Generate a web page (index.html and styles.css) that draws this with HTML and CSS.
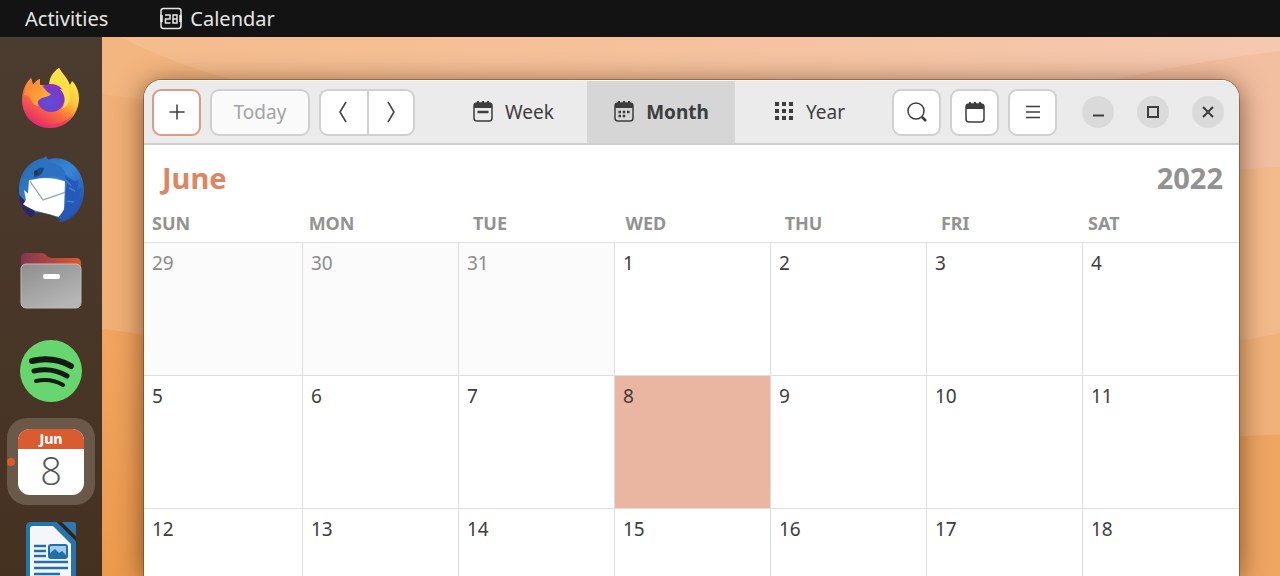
FILE: index.html
```
<!DOCTYPE html>
<html lang="en">
<head>
    <meta charset="UTF-8">
    <meta name="viewport" content="width=device-width, initial-scale=1.0">
    <title>Calendar</title>
    <link rel="stylesheet" href="styles.css">
</head>
<body>
    <header class="topbar">
        <button class="activities">Activities</button>
        <button class="app-menu">
            <svg width="24" height="24" viewBox="0 0 24 24" fill="none" stroke="#e6e6e6" stroke-width="1.5">
                <rect x="2" y="1.500" width="20" height="20" rx="2.5"/>
                <path d="M2.500 8v7M21.500 8v7" stroke-width="2.500"/>
                <path d="M6 8h5v4H6.500v4H11.500M14 8h4v8h-4zM14 12h4"/>
            </svg>
            Calendar
        </button>
    </header>
    <div class="desktop">
        <svg class="wallpaper" viewBox="0 0 1280 540" preserveAspectRatio="none">
            <defs>
                <linearGradient id="sky" x1="0" y1="0" x2="1" y2="0">
                    <stop offset="0" stop-color="#f5bb88"/>
                    <stop offset="1" stop-color="#f5c8b0"/>
                </linearGradient>
                <linearGradient id="low" x1="0" y1="0" x2="0" y2="1">
                    <stop offset="0" stop-color="#f2a561"/>
                    <stop offset="1" stop-color="#ec9a4c"/>
                </linearGradient>
            </defs>
            <rect width="1280" height="540" fill="url(#sky)"/>
            <path d="M1000 70Q1160 28 1280 14V540H1000z" fill="#f3bfa1"/>
            <path d="M0 0H120Q190 35 270 52V540H0z" fill="#f3b681"/>
            <path d="M0 48Q140 55 270 90V540H0z" fill="#f1b077"/>
            <path d="M1000 160Q1200 134 1280 130V540H1000z" fill="#f3ba8b"/>
            <path d="M1000 320Q1240 310 1280 296V540H1000z" fill="#f1b27a"/>
            <path d="M0 285Q140 287 270 330V540H0z" fill="url(#low)"/>
            <path d="M1000 415Q1200 402 1280 398V540H1000z" fill="#efa663"/>
        </svg>
        <nav class="dock" aria-label="Dock">
            <a href="#" class="dock-item" aria-label="Firefox">
                <svg width="64" height="64" viewBox="0 0 64 64">
                    <defs>
                        <linearGradient id="fox" x1="0.8" y1="0.1" x2="0.25" y2="0.95">
                            <stop offset="0" stop-color="#fff04a"/>
                            <stop offset="0.35" stop-color="#ffc43b"/>
                            <stop offset="0.65" stop-color="#fb6b3c"/>
                            <stop offset="1" stop-color="#e62c6b"/>
                        </linearGradient>
                        <radialGradient id="globe" cx="0.45" cy="0.65" r="0.7">
                            <stop offset="0" stop-color="#5a4fd8"/>
                            <stop offset="1" stop-color="#8a2fc4"/>
                        </radialGradient>
                        <linearGradient id="mane" x1="0" y1="0" x2="1" y2="1">
                            <stop offset="0" stop-color="#fb7d35"/>
                            <stop offset="1" stop-color="#ffb83a"/>
                        </linearGradient>
                    </defs>
                    <path d="M40 2c3 5 8 9 11 17l2-4c4 4 7 10 7 17 0 17-13 30-29 30S3 50 3 34c0-9 3-16 9-22l2 7c2-3 4-5 7-6l0 6 9 1C30 12 34 6 40 2z" fill="url(#fox)"/>
                    <circle cx="32" cy="32" r="14" fill="url(#globe)"/>
                    <path d="M5 29C7 22 9 17 12 12l2 7c2-3 4-5 7-6v7c5 0 5 6 11 8-2 3-7 3-9 4-4 2-5 4-4 8-8-1-5-11-14-11z" fill="url(#mane)"/>
                    <path d="M40 2c-6 4-10 11-9 16 6-1 11 1 14 6l-4-1c6 6 6 15 2 20 8-3 10-14 6-22C47 14 43 9 40 2z" fill="#ffe04a"/>
                    <path d="M6 46c9 14 32 18 48 3-6 9-14 13-23 13S11 56 6 46z" fill="#e0307c" opacity="0.6"/>
                </svg>
            </a>
            <a href="#" class="dock-item" aria-label="Thunderbird">
                <svg width="68" height="68" viewBox="0 0 68 62" preserveAspectRatio="none">
                    <defs>
                        <linearGradient id="bird" x1="0" y1="0" x2="1" y2="1">
                            <stop offset="0" stop-color="#2463ad"/>
                            <stop offset="0.5" stop-color="#3586d8"/>
                            <stop offset="1" stop-color="#213f9c"/>
                        </linearGradient>
                    </defs>
                    <path d="M29 1l-3 2C12 5 2 17 2 32c0 11 6 20 14 25h15l12 4c14-1 24-14 24-29C67 14 52 2 37 3l-6 1z" fill="url(#bird)"/>
                    <path d="M2 36c1 11 6 18 14 22l5-3-14-14z" fill="#2a2468"/>
                    <path d="M12 23c11-3 24-3 36 1l-1 28-3 5C29 53 17 52 6 45l3-4-2-9 4 3z" fill="#fff"/>
                    <path d="M13 24l13 17 22-7" fill="none" stroke="#9ba4ab" stroke-width="1.200"/>
                    <path d="M13 22C18 10 28 4 38 8c9 3 13 10 12 18-6-7-14-7-24-6-5 1-9 3-13 2z" fill="#2e70c2"/>
                    <path d="M17 17c3-5 6-6 10-5-1 5-5 8-10 8z" fill="#174a85"/>
                    <circle cx="19" cy="16" r="2" fill="#34312f"/>
                    <path d="M48 18c4 11-1 14 1 21 1 7-2 13-12 22 14-2 25-10 28-23l-4 3 4-11-5 2 2-9-5 1z" fill="#2459b8"/>
                    <path d="M49 23l5 5M52 30l6 3M50 42l7 1" stroke="#3f8ad6" stroke-width="1.200"/>
                    <path d="M14 57l6-5c8 1 16 3 24 7l-3 3H14z" fill="#4a3a2c"/>
                </svg>
            </a>
            <a href="#" class="dock-item" aria-label="Files">
                <svg width="64" height="60" viewBox="0 0 64 60">
                    <defs>
                        <linearGradient id="folder" x1="0" y1="0" x2="1" y2="0">
                            <stop offset="0" stop-color="#843553"/>
                            <stop offset="1" stop-color="#df592d"/>
                        </linearGradient>
                        <linearGradient id="drawer" x1="0" y1="0" x2="0.6" y2="1">
                            <stop offset="0" stop-color="#8e8e8e"/>
                            <stop offset="1" stop-color="#b5b5b5"/>
                        </linearGradient>
                    </defs>
                    <path d="M2 8q0-5 5-5h16q3 0 5 3 2 2 5 2h24q5 0 5 5v20H2z" fill="url(#folder)"/>
                    <rect x="2" y="14" width="60" height="44" rx="5" fill="url(#drawer)" stroke="#bdbdbd"/>
                    <rect x="24" y="24" width="17" height="5" rx="2" fill="#fff"/>
                </svg>
            </a>
            <a href="#" class="dock-item" aria-label="Spotify">
                <svg width="64" height="64" viewBox="0 0 64 64">
                    <circle cx="32" cy="32" r="31" fill="#67d66f"/>
                    <g fill="none" stroke="#111b12" stroke-linecap="round">
                        <path d="M13 22Q34 17 52 27" stroke-width="6"/>
                        <path d="M15 32Q33 28 48 37" stroke-width="5"/>
                        <path d="M17 42Q32 39 44 46" stroke-width="4"/>
                    </g>
                </svg>
            </a>
            <a href="#" class="dock-item active" aria-label="Calendar">
                <span class="calendar-icon">
                    <span class="calendar-month">Jun</span>
                    <span class="calendar-day">8</span>
                </span>
            </a>
            <a href="#" class="dock-item" aria-label="Writer">
                <svg width="52" height="64" viewBox="0 0 52 64">
                    <path d="M6 1h26l19 19v43H1V6q0-5 5-5z" fill="#2674ad"/>
                    <path d="M8 5h20l18 18v40H5V8q0-3 3-3z" fill="#f4f6f8"/>
                    <path d="M37 1h11q3 0 3 3v11z" fill="#2f78b5"/>
                    <path d="M32 1l19 19v-4L36 1z" fill="#2a241f"/>
                    <path d="M9 25h12M9 30h12M9 35h12M9 41h34M9 47h34M9 53h26" stroke="#236fa9" stroke-width="2.500"/>
                    <rect x="24" y="24" width="18" height="13" rx="2" fill="#9ecdf0" stroke="#236fa9" stroke-width="2"/>
                    <path d="M25 36v-4l5-4 4 4 3-2 4 4v2z" fill="#236fa9"/>
                </svg>
            </a>
        </nav>
        <main class="window">
            <div class="headerbar">
                <button class="btn add" aria-label="New event">
                    <svg width="20" height="20" viewBox="0 0 20 20"><path d="M10 2.500v15M2.500 10h15"/></svg>
                </button>
                <button class="btn today" disabled>Today</button>
                <div class="linked">
                    <button class="btn" aria-label="Previous month">
                        <svg width="20" height="24" viewBox="0 0 20 24"><path d="M12 2L6 12l6 10"/></svg>
                    </button>
                    <button class="btn" aria-label="Next month">
                        <svg width="20" height="24" viewBox="0 0 20 24"><path d="M7 2l6 10-6 10"/></svg>
                    </button>
                </div>
                <div class="tabs">
                    <button class="tab">
                        <svg width="22" height="24" viewBox="0 0 22 24">
                            <rect x="2" y="3" width="18" height="18" rx="3"/>
                            <path d="M2 8V5q0-2 2-2h14q2 0 2 2v3zM5 1h2v3H5zM10 1h2v3h-2zM15 1h2v3h-2z" class="solid"/>
                            <path d="M5.500 12h11" stroke-width="2.500"/>
                        </svg>
                        Week
                    </button>
                    <button class="tab selected">
                        <svg width="22" height="24" viewBox="0 0 22 24">
                            <rect x="2" y="3" width="18" height="18" rx="3"/>
                            <path d="M2 8V5q0-2 2-2h14q2 0 2 2v3zM5 1h2v3H5zM10 1h2v3h-2zM15 1h2v3h-2z" class="solid"/>
                            <path d="M5.500 12h11M5.500 16h7" stroke-width="2.500" stroke-dasharray="2.500 1.750"/>
                        </svg>
                        Month
                    </button>
                    <button class="tab">
                        <svg width="22" height="24" viewBox="0 0 22 24">
                            <path d="M2 4h18M2 11h18M2 18h18" stroke-width="4" stroke-dasharray="4 3"/>
                        </svg>
                        Year
                    </button>
                </div>
                <button class="btn" aria-label="Search">
                    <svg width="22" height="22" viewBox="0 0 22 22"><circle cx="10" cy="10" r="8"/><path d="M16 16l4 4" stroke-width="2.500"/></svg>
                </button>
                <button class="btn" aria-label="Calendars">
                    <svg width="22" height="22" viewBox="0 0 22 22">
                        <rect x="2" y="3" width="18" height="18" rx="3"/>
                        <path d="M2 8V5q0-2 2-2h14q2 0 2 2v3zM5 1h2v3H5zM10 1h2v3h-2zM15 1h2v3h-2z" class="solid"/>
                    </svg>
                </button>
                <button class="btn" aria-label="Menu">
                    <svg width="20" height="20" viewBox="0 0 20 20"><path d="M3 4.500h14M3 10h14M3 15.500h14"/></svg>
                </button>
                <div class="controls">
                    <button class="control" aria-label="Minimize">
                        <svg width="16" height="16" viewBox="0 0 16 16"><path d="M3 11.500h11"/></svg>
                    </button>
                    <button class="control" aria-label="Maximize">
                        <svg width="16" height="16" viewBox="0 0 16 16"><rect x="3" y="3" width="10" height="10"/></svg>
                    </button>
                    <button class="control" aria-label="Close">
                        <svg width="16" height="16" viewBox="0 0 16 16"><path d="M3 3l10 10M13 3L3 13"/></svg>
                    </button>
                </div>
            </div>
            <div class="title">
                <h1>June</h1>
                <span class="year">2022</span>
            </div>
            <table class="month">
                <thead>
                    <tr><th>SUN</th><th>MON</th><th>TUE</th><th>WED</th><th>THU</th><th>FRI</th><th>SAT</th></tr>
                </thead>
                <tbody>
                    <tr><td class="other">29</td><td class="other">30</td><td class="other">31</td><td>1</td><td>2</td><td>3</td><td>4</td></tr>
                    <tr><td>5</td><td>6</td><td>7</td><td class="current">8</td><td>9</td><td>10</td><td>11</td></tr>
                    <tr><td>12</td><td>13</td><td>14</td><td>15</td><td>16</td><td>17</td><td>18</td></tr>
                </tbody>
            </table>
        </main>
    </div>
</body>
</html>
```
FILE: styles.css
```
* {
    box-sizing: border-box;
}

body {
    display: flex;
    flex-direction: column;
    height: 100vh;
    margin: 0;
    overflow: hidden;
    font-family: "Noto Sans", sans-serif;
    font-size: 19px;
    line-height: 24px;
    color: #3d3d3d;
}

button {
    margin: 0;
    padding: 0;
    border: none;
    background: none;
    font: inherit;
    color: inherit;
}

.topbar {
    display: flex;
    flex-shrink: 0;
    gap: 51px;
    height: 37px;
    padding-left: 25px;
    background: #131313;
    color: #e6e6e6;
    font-size: 20px;
}

.app-menu {
    display: flex;
    align-items: center;
    gap: 7px;
}

.desktop {
    position: relative;
    display: flex;
    flex: 1;
    min-height: 0;
    overflow: hidden;
    background: #f3b681;
}

.wallpaper {
    position: absolute;
    width: 100%;
    height: 100%;
}

.dock {
    position: relative;
    z-index: 1;
    display: flex;
    flex-direction: column;
    flex-shrink: 0;
    align-items: center;
    gap: 4px;
    width: 102px;
    padding-top: 17px;
    background: linear-gradient(#4b3c30, #453120);
}

.dock-item {
    position: relative;
    display: flex;
    flex-shrink: 0;
    align-items: center;
    justify-content: center;
    width: 88px;
    height: 87px;
    border-radius: 20px;
    text-decoration: none;
}

.dock-item.active {
    background: #6a5949;
}

.dock-item.active::before {
    content: "";
    position: absolute;
    left: 0;
    width: 8px;
    height: 8px;
    border-radius: 50%;
    background: #dc5a2c;
}

.calendar-icon {
    width: 66px;
    height: 66px;
    border-radius: 12px;
    background: #fff;
    text-align: center;
}

.calendar-month {
    display: block;
    height: 20px;
    border-radius: 12px 12px 0 0;
    background: #d95b30;
    color: #fff;
    font-size: 14px;
    font-weight: 800;
    line-height: 20px;
}

.calendar-day {
    display: block;
    color: #555;
    font-family: "Open Sans", sans-serif;
    font-size: 38px;
    font-weight: 300;
    line-height: 42px;
}

.window {
    position: relative;
    flex: 1;
    margin: 43px 41px 0 42px;
    border-radius: 18px 18px 0 0;
    background: #fff;
    box-shadow: 0 0 0 1px rgba(80, 40, 10, 0.4), 0 4px 28px rgba(70, 35, 10, 0.7);
}

.headerbar {
    display: flex;
    align-items: center;
    gap: 9px;
    height: 65px;
    padding: 0 15px 0 8px;
    border-top: 1px solid #f8f8f8;
    border-bottom: 2px solid #cfcfcf;
    border-radius: 18px 18px 0 0;
    background: #ebebeb;
}

.headerbar svg {
    fill: none;
    stroke: #3d3d3d;
    stroke-width: 1.5;
}

.headerbar .solid {
    fill: #3d3d3d;
    stroke: none;
}

.btn {
    display: flex;
    align-items: center;
    justify-content: center;
    width: 49px;
    height: 47px;
    border: 2px solid #d0d0d0;
    border-radius: 9px;
    background: #fff;
}

.add {
    border-color: #e09a7f;
}

.today {
    width: 100px;
    background: #fafafa;
    color: #a3a3a3;
}

.linked {
    display: flex;
}

.linked .btn {
    width: 48px;
}

.linked .btn:first-child {
    border-right: none;
    border-radius: 9px 0 0 9px;
}

.linked .btn:last-child {
    border-radius: 0 9px 9px 0;
}

.tabs {
    display: flex;
    align-self: stretch;
    margin-left: auto;
}

.tab {
    display: flex;
    align-items: center;
    justify-content: center;
    gap: 11px;
    width: 148px;
}

.tab.selected {
    background: #d6d6d6;
    font-weight: 700;
}

.controls {
    display: flex;
    gap: 23px;
    margin-left: 16px;
}

.control {
    display: flex;
    align-items: center;
    justify-content: center;
    width: 32px;
    height: 32px;
    border-radius: 50%;
    background: #dadada;
}

.control svg {
    stroke-width: 2;
}

.title {
    display: flex;
    align-items: center;
    justify-content: space-between;
    padding: 15px 16px 0 18px;
    color: #929292;
    font-size: 29px;
    font-weight: 700;
    line-height: 36px;
}

h1 {
    margin: 0;
    color: #e08562;
    font-size: inherit;
}

.month,
.month thead,
.month tbody {
    display: block;
}

.month thead tr {
    display: flex;
    padding: 15px 9px 7px 0;
}

.month th {
    flex: 1 1 auto;
    padding: 0 0 0 8px;
    color: #929292;
    font-size: 18px;
    font-weight: 700;
    text-align: left;
}

.month tbody tr {
    display: grid;
    grid-template-columns: 159fr repeat(6, 156fr);
}

.month td {
    height: 133px;
    padding: 8px;
    border-top: 1px solid #dedede;
    border-right: 1px solid #dedede;
}

.month td:last-child {
    border-right: none;
}

.month .other {
    background: #fbfbfb;
    color: #8c8c8c;
}

.month .current {
    background: #eab5a1;
}
```
